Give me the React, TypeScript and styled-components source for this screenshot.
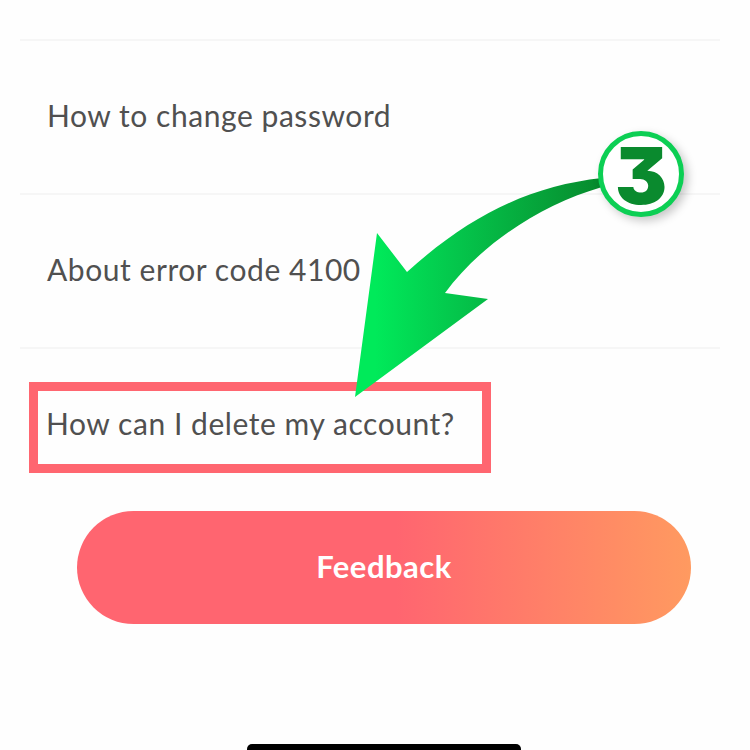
import styled, { createGlobalStyle } from "styled-components";

const GlobalStyle = createGlobalStyle`
  html, body {
    margin: 0;
    padding: 0;
    background: #fefefe;
  }
`;

const Screen = styled.div`
  position: relative;
  width: 750px;
  height: 750px;
  overflow: hidden;
  background: #fefefe;
  font-family: "Lato", "Noto Sans", sans-serif;
  color: #505050;
`;

const List = styled.div`
  display: flex;
  flex-direction: column;
  padding: 39px 30px 0 20px;
`;

const Row = styled.div`
  display: flex;
  align-items: center;
  box-sizing: border-box;
  height: 154px;
  padding: 0 0 4px 27px;
  border-top: 2px solid #f6f6f6;
`;

const LastRow = styled.div`
  display: flex;
  box-sizing: border-box;
  height: 154px;
  padding: 33px 0 0 9px;
  border-top: 2px solid #f6f6f6;
`;

const Highlight = styled.div`
  display: flex;
  align-items: center;
  box-sizing: border-box;
  width: 462px;
  height: 91px;
  padding: 0 0 10px 8px;
  border: 9px solid #ff6670;
`;

const Label = styled.span`
  font-size: 30px;
  line-height: 36px;
  letter-spacing: 0.55px;
`;

const Footer = styled.div`
  display: flex;
  justify-content: flex-start;
  padding: 10px 0 0 77px;
`;

const FeedbackButton = styled.button`
  box-sizing: border-box;
  width: 614px;
  height: 113px;
  padding: 0 0 4px;
  border: none;
  border-radius: 57px;
  background: linear-gradient(90deg, #ff6570 0%, #ff6570 52%, #ff9a60 100%);
  color: #ffffff;
  font-family: inherit;
  font-size: 31px;
  font-weight: 700;
  letter-spacing: 0.5px;
`;

const HomeIndicator = styled.div`
  position: absolute;
  left: 247px;
  bottom: -4px;
  width: 274px;
  height: 10px;
  border-radius: 5px;
  background: #000000;
`;

const ArrowLayer = styled.svg`
  position: absolute;
  top: 0;
  left: 0;
  pointer-events: none;
`;

const StepBadge = styled.div`
  position: absolute;
  left: 598px;
  top: 131px;
  display: flex;
  align-items: center;
  justify-content: center;
  box-sizing: border-box;
  width: 86px;
  height: 86px;
  padding-top: 3px;
  border: 5px solid #0ccf54;
  border-radius: 50%;
  background: #ffffff;
  box-shadow: 4px 4px 10px rgba(0, 0, 0, 0.22);
  color: #0a8a2e;
  font-family: "Inter", "Liberation Sans", sans-serif;
  font-size: 78px;
  font-weight: 900;
  font-feature-settings: "cv09";
  line-height: 1;
`;

export default function App() {
  return (
    <Screen>
      <GlobalStyle />
      <List>
        <Row>
          <Label>How to change password</Label>
        </Row>
        <Row>
          <Label>About error code 4100</Label>
        </Row>
        <LastRow>
          <Highlight>
            <Label>How can I delete my account?</Label>
          </Highlight>
        </LastRow>
      </List>
      <Footer>
        <FeedbackButton>Feedback</FeedbackButton>
      </Footer>
      <HomeIndicator />
      <ArrowLayer width="750" height="750" viewBox="0 0 750 750">
        <defs>
          <linearGradient id="arrowFill" gradientUnits="userSpaceOnUse" x1="375" y1="0" x2="600" y2="0">
            <stop offset="0" stopColor="#00ea5a" />
            <stop offset="0.35" stopColor="#04c74c" />
            <stop offset="1" stopColor="#078a2d" />
          </linearGradient>
        </defs>
        <path
          d="M355 397 L377 233 L407 272 C470 215 530 186 602 178 L602 187 C540 205 480 245 445 293 L488 299 Z"
          fill="url(#arrowFill)"
        />
      </ArrowLayer>
      <StepBadge>3</StepBadge>
    </Screen>
  );
}
